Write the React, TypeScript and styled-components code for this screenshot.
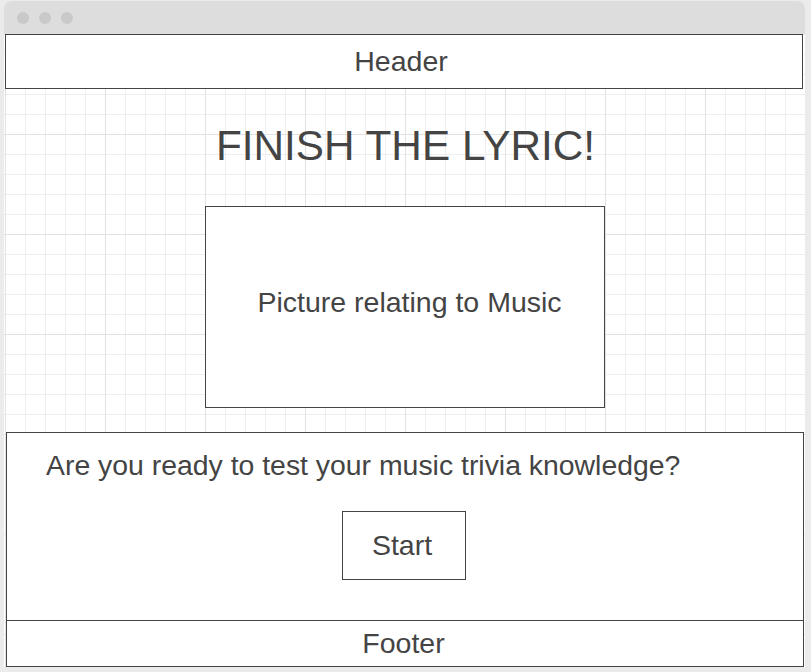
import React from "react";
import styled, { createGlobalStyle } from "styled-components";

const GlobalStyle = createGlobalStyle`
  html, body {
    margin: 0;
    padding: 0;
    background: #ebebeb;
  }
  body {
    font-family: "Liberation Sans", Arial, sans-serif;
    color: #444444;
  }
`;

const Window = styled.div`
  margin: 1px 0 0 4px;
  width: 801px;
  border-radius: 7px 7px 0 0;
  overflow: hidden;
  background: #ffffff;
`;

const TitleBar = styled.div`
  height: 33px;
  background: #dddddd;
  display: flex;
  align-items: center;
  gap: 10px;
  padding-left: 13px;
`;

const Dot = styled.span`
  width: 12px;
  height: 12px;
  border-radius: 50%;
  background: #c9c9c9;
`;

const Canvas = styled.div`
  display: flex;
  flex-direction: column;
  background-color: #ffffff;
  background-image:
    linear-gradient(to right, #e2e2e2 1px, transparent 1px),
    linear-gradient(to bottom, #e2e2e2 1px, transparent 1px),
    linear-gradient(to right, #eeeeee 1px, transparent 1px),
    linear-gradient(to bottom, #eeeeee 1px, transparent 1px);
  background-size: 100px 100px, 100px 100px, 20px 20px, 20px 20px;
  background-position: 1px 0, 1px 0, 1px 0, 1px 0;
`;

const Header = styled.header`
  margin-left: 1px;
  width: 790px;
  height: 53px;
  border: 1px solid #444444;
  background: #ffffff;
  display: flex;
  align-items: center;
  justify-content: center;
  font-size: 28.5px;
  padding-right: 6px;
`;

const Title = styled.h1`
  margin: 33px 0 0;
  text-align: center;
  font-weight: 400;
  font-size: 42.3px;
  line-height: 48px;
  padding-left: 2px;
`;

const Picture = styled.div`
  margin: 36px 0 0 201px;
  width: 389px;
  height: 190px;
  border: 1px solid #444444;
  background: #ffffff;
  display: flex;
  align-items: center;
  justify-content: center;
  padding: 0 0 10px 9px;
  font-size: 28.5px;
`;

const Panel = styled.section`
  margin: 24px 0 0 2px;
  width: 796px;
  border: 1px solid #444444;
  background: #ffffff;
  display: flex;
  flex-direction: column;
`;

const Body = styled.div`
  height: 187px;
  display: flex;
  flex-direction: column;
  align-items: center;
`;

const Question = styled.p`
  align-self: flex-start;
  margin: 16px 0 0 39px;
  font-size: 28.4px;
  line-height: 32px;
`;

const StartButton = styled.button`
  margin: 30px 0 0 -3px;
  width: 124px;
  height: 69px;
  border: 1px solid #444444;
  background: #ffffff;
  color: #444444;
  font-family: "Liberation Sans", Arial, sans-serif;
  font-size: 28.5px;
  padding: 0 3px 0 0;
  cursor: pointer;
`;

const Footer = styled.footer`
  height: 45px;
  border-top: 1px solid #444444;
  display: flex;
  align-items: center;
  justify-content: center;
  font-size: 28.5px;
  padding-right: 3px;
`;

export default function App() {
  return (
    <>
      <GlobalStyle />
      <Window>
        <TitleBar>
          <Dot />
          <Dot />
          <Dot />
        </TitleBar>
        <Canvas>
          <Header>Header</Header>
          <Title>FINISH THE LYRIC!</Title>
          <Picture>Picture relating to Music</Picture>
          <Panel>
            <Body>
              <Question>Are you ready to test your music trivia knowledge?</Question>
              <StartButton>Start</StartButton>
            </Body>
            <Footer>Footer</Footer>
          </Panel>
        </Canvas>
      </Window>
    </>
  );
}
